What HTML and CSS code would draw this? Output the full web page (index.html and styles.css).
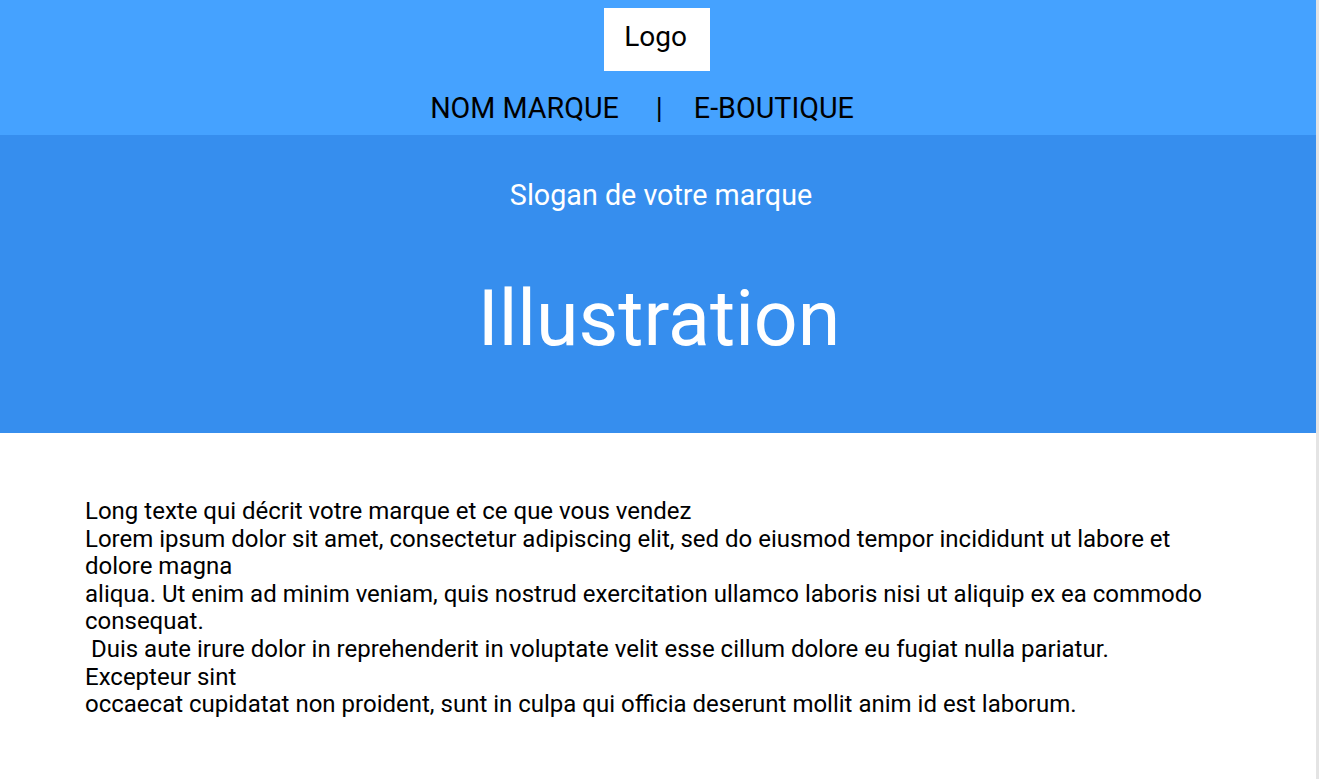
FILE: index.html
```html
<!DOCTYPE html>
<html lang="fr">
<head>
<meta charset="utf-8">
<title>Marque</title>
<link rel="stylesheet" href="styles.css">
</head>
<body>
<div class="page">
  <header class="header">
    <div class="logo">Logo</div>
    <nav class="nav">
      <span class="nav-item">NOM MARQUE</span>
      <span class="nav-sep">|</span>
      <span class="nav-item">E-BOUTIQUE</span>
    </nav>
  </header>
  <section class="hero">
    <p class="slogan">Slogan de votre marque</p>
    <h1 class="illustration">Illustration</h1>
  </section>
  <main class="content">
    <p class="text">Long texte qui décrit votre marque et ce que vous vendez<br>
Lorem ipsum dolor sit amet, consectetur adipiscing elit, sed do eiusmod tempor incididunt ut labore et dolore magna<br>
aliqua. Ut enim ad minim veniam, quis nostrud exercitation ullamco laboris nisi ut aliquip ex ea commodo consequat.<br>
&nbsp;Duis aute irure dolor in reprehenderit in voluptate velit esse cillum dolore eu fugiat nulla pariatur. Excepteur sint<br>
occaecat cupidatat non proident, sunt in culpa qui officia deserunt mollit anim id est laborum.</p>
  </main>
</div>
</body>
</html>
```
FILE: styles.css
```css
html, body {
  margin: 0;
  padding: 0;
  background: #ffffff;
}
body {
  font-family: Roboto, "Liberation Sans", sans-serif;
  color: #000000;
  border-right: 3px solid #e4e4e4;
  min-height: 779px;
  box-sizing: border-box;
  overflow: hidden;
}
.page {
  display: flex;
  flex-direction: column;
}
.header {
  background: #45a2ff;
  height: 135px;
  display: flex;
  flex-direction: column;
  align-items: center;
  padding-top: 8px;
  box-sizing: border-box;
}
.logo {
  background: #ffffff;
  width: 106px;
  height: 63px;
  margin-right: 2px;
  box-sizing: border-box;
  padding: 0 3px 6px 0;
  display: flex;
  align-items: center;
  justify-content: center;
  font-size: 28px;
}
.nav {
  display: flex;
  align-items: center;
  margin-top: 21px;
  margin-right: 32px;
  font-size: 28.7px;
  line-height: 32px;
}
.nav-sep {
  margin: 0 31px 0 37px;
}
.hero {
  background: #368eee;
  height: 298px;
  display: flex;
  flex-direction: column;
  align-items: center;
  color: #ffffff;
}
.slogan {
  margin: 44px 0 0 6px;
  font-size: 28.7px;
  line-height: 32px;
}
.illustration {
  margin: 63px 0 0 2px;
  font-weight: 400;
  font-size: 77px;
  line-height: 90px;
}
.content {
  padding: 65px 106px 0 85px;
}
.text {
  margin: 0;
  font-size: 24px;
  line-height: 27.6px;
}
```
